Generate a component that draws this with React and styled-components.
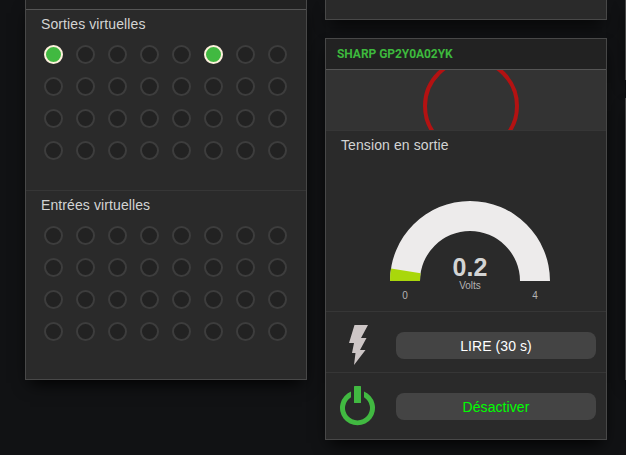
import React from "react";
import styled, { createGlobalStyle } from "styled-components";

const GlobalStyle = createGlobalStyle`
  body {
    margin: 0;
    background: #111214;
    color: #d3d4d4;
    font-family: "Liberation Sans", Arial, sans-serif;
    overflow: hidden;
  }
`;

const Board = styled.main`
  display: flex;
  align-items: flex-start;
  gap: 18px;
  box-sizing: border-box;
  width: 626px;
  height: 455px;
  padding-left: 25px;
  overflow: hidden;
`;

const Column = styled.div`
  display: flex;
  flex: none;
  flex-direction: column;
  gap: 18px;
  width: 282px;
`;

const Pane = styled.section`
  box-sizing: border-box;
  height: ${(p) => p.$height}px;
  background: #2a2a2a;
  border: 1px solid #484848;
  border-top-width: ${(p) => (p.$cut ? 0 : 1)}px;
  box-shadow: 0 8px 16px -5px #000;
`;

const PaneHeader = styled.header`
  box-sizing: border-box;
  height: ${(p) => p.$height || 31}px;
  padding-left: 11px;
  background: #222;
  border-bottom: 1px solid #555;
  color: #3db93d;
  font: bold 12px/30px Roboto, sans-serif;
  letter-spacing: -0.05px;
  white-space: nowrap;
`;

const Section = styled.div`
  box-sizing: border-box;
  height: ${(p) => p.$height}px;
  border-bottom: ${(p) => (p.$last ? 0 : 1)}px solid #363636;
`;

const Title = styled.h2`
  margin: 0;
  padding: 5px 0 0 15px;
  font-size: 14px;
  font-weight: normal;
  letter-spacing: 0.1px;
  line-height: 19px;
`;

const Lights = styled.div`
  display: grid;
  grid-template-columns: repeat(8, 19px);
  gap: 13px;
  padding: 11px 0 0 18px;
`;

const Light = styled.span`
  box-sizing: border-box;
  height: 19px;
  border: 2px solid ${(p) => (p.$on ? "#fdf1dc" : "#3d3d3d")};
  border-radius: 50%;
  background: ${(p) => (p.$on ? "#41b941" : "#222")};
`;

const RadarSection = styled(Section)`
  background: #333;
`;

const Drawing = styled.svg`
  display: block;
`;

const GaugeText = styled.text`
  fill: ${(p) => (p.$value ? "#d3d4d4" : "#b3b3b3")};
  font-size: ${(p) => (p.$value ? 25 : 10)}px;
  font-weight: ${(p) => (p.$value ? "bold" : "normal")};
  text-anchor: middle;
`;

const Action = styled(Section)`
  display: flex;
  align-items: flex-start;
`;

const IconCell = styled.div`
  width: 70px;
`;

const Button = styled.button`
  width: 200px;
  height: 27px;
  margin-top: 20px;
  padding: 0;
  border: 0;
  border-radius: 8px;
  background: #444;
  color: ${(p) => p.$color};
  font: 14px "Liberation Sans", Arial, sans-serif;
  letter-spacing: 0.08px;
`;

const LightBank = ({ title, on = [] }) => (
  <>
    <Title>{title}</Title>
    <Lights>
      {Array.from({ length: 32 }, (_, i) => (
        <Light key={i} $on={on.includes(i)} />
      ))}
    </Lights>
  </>
);

// Half ring, 80px outer and 50px inner radius, centred on (144, 126)
const Gauge = ({ value, max, unit }) => {
  const angle = Math.PI * (1 - value / max);
  const at = (r) => `${144 + r * Math.cos(angle)} ${126 - r * Math.sin(angle)}`;
  return (
    <Drawing width="280" height="156">
      <path
        d="M64 126A80 80 0 0 1 224 126H194A50 50 0 0 0 94 126Z"
        fill="#edebeb"
      />
      <path
        d={`M64 126A80 80 0 0 1 ${at(80)}L${at(50)}A50 50 0 0 0 94 126Z`}
        fill="#a9d70b"
      />
      <GaugeText $value x="144" y="121">
        {value}
      </GaugeText>
      <GaugeText x="144" y="134">
        {unit}
      </GaugeText>
      <GaugeText x="79" y="144">
        0
      </GaugeText>
      <GaugeText x="209" y="144">
        {max}
      </GaugeText>
    </Drawing>
  );
};

const BoltIcon = () => (
  <Drawing width="70" height="60">
    <path
      d="M28.500 13H42L35 26H40.500L34 38H39.500L28 53L29.500 41H26L28 31H23Z"
      fill="#cdc6c6"
    />
  </Drawing>
);

const PowerIcon = () => (
  <Drawing width="70" height="60">
    <path
      d="M25 18.600A17.500 17.500 0 1 0 38 18.600V24.200A12.500 12.500 0 1 1 25 24.200Z"
      fill="#41b941"
    />
    <rect x="28" y="13" width="7" height="17" rx="0.500" fill="#41b941" />
  </Drawing>
);

export default function App() {
  return (
    <>
      <GlobalStyle />
      <Board>
        <Column>
          <Pane $height={380} $cut>
            <PaneHeader $height={10} />
            <Section $height={181}>
              <LightBank title="Sorties virtuelles" on={[0, 5]} />
            </Section>
            <Section $height={188} $last>
              <LightBank title="Entrées virtuelles" />
            </Section>
          </Pane>
        </Column>
        <Column>
          <Pane $height={20} $cut />
          <Pane $height={402}>
            <PaneHeader>SHARP GP2Y0A02YK</PaneHeader>
            <RadarSection $height={61}>
              <Drawing width="280" height="60">
                <circle
                  cx="145"
                  cy="36"
                  r="46"
                  fill="none"
                  stroke="#b31212"
                  strokeWidth="4"
                />
              </Drawing>
            </RadarSection>
            <Section $height={181}>
              <Title>Tension en sortie</Title>
              <Gauge value={0.2} max={4} unit="Volts" />
            </Section>
            <Action $height={61}>
              <IconCell>
                <BoltIcon />
              </IconCell>
              <Button $color="#fff">LIRE (30 s)</Button>
            </Action>
            <Action $height={66} $last>
              <IconCell>
                <PowerIcon />
              </IconCell>
              <Button $color="#0f0">Désactiver</Button>
            </Action>
          </Pane>
        </Column>
        <Column>
          <Pane $height={80} $cut />
          <Pane $height={282} />
        </Column>
      </Board>
    </>
  );
}
